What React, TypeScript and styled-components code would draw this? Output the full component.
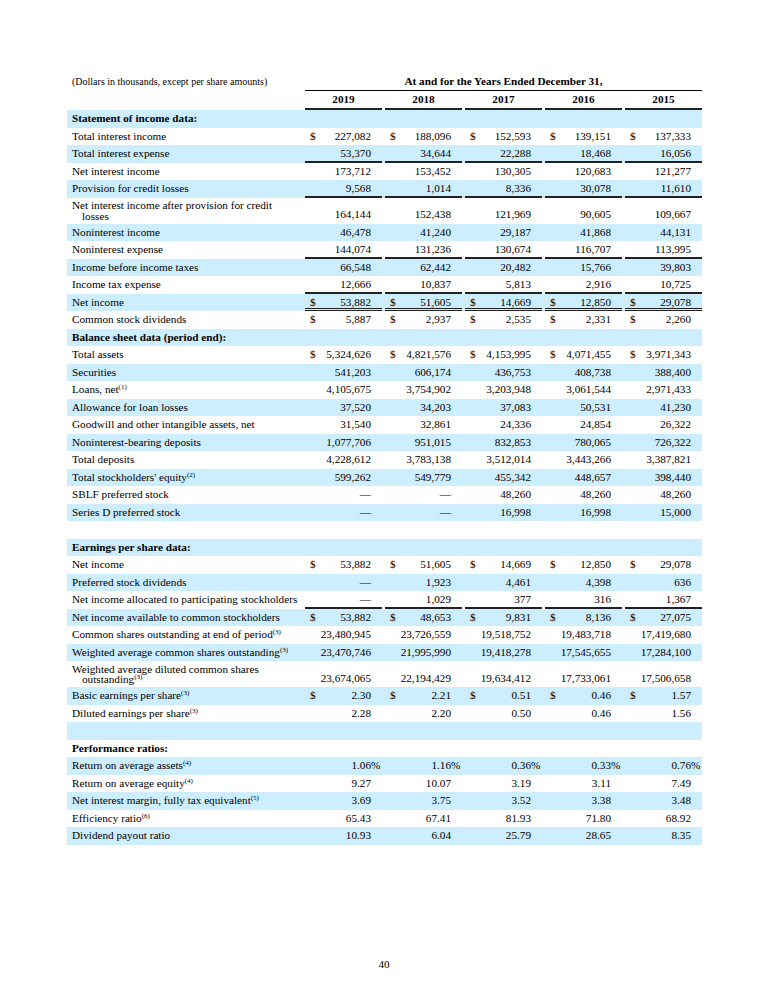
import React from 'react';
import styled, { createGlobalStyle, css } from 'styled-components';

const GlobalStyle = createGlobalStyle`
  html, body { margin: 0; padding: 0; background: #fff; }
  body { font-family: "Liberation Serif", "Times New Roman", serif; color: #000; }
`;

const COLS = '235px repeat(5, 80px)';
const SHADE = '#cceeff';
const RULE = '#222';

const Page = styled.div`
  width: 768px;
  min-height: 993px;
  box-sizing: border-box;
  padding-top: 73px;
  font-size: 11.2px;
`;

const Table = styled.div`
  width: 635px;
  margin-left: 67px;
  display: flex;
  flex-direction: column;
`;

const HeadRow = styled.div`
  display: grid;
  grid-template-columns: 235px 400px;
  height: 18px;
`;

const Note = styled.div`
  font-size: 10px;
  padding-left: 5px;
  line-height: 17px;
`;

const Title = styled.div`
  margin-left: 3px;
  box-sizing: border-box;
  border-bottom: 1px solid #000;
  text-align: center;
  font-weight: bold;
  line-height: 17px;
`;

const YearRow = styled.div`
  display: grid;
  grid-template-columns: ${COLS};
  height: 19px;
`;

const Year = styled.div`
  margin-left: 3px;
  font-weight: bold;
  text-align: center;
  line-height: 17px;
  background: linear-gradient(${RULE}, ${RULE}) left bottom / 100% 2px no-repeat;
`;

const Row = styled.div<{ $shaded: boolean; $tall?: boolean }>`
  display: grid;
  grid-template-columns: ${COLS};
  height: ${p => (p.$tall ? '26px' : '17.5px')};
  background: ${p => (p.$shaded ? SHADE : '#fff')};
`;

const Label = styled.div<{ $bold?: boolean; $tall?: boolean }>`
  padding-left: 5px;
  white-space: nowrap;
  font-weight: ${p => (p.$bold ? 'bold' : 'normal')};
  line-height: ${p => (p.$tall ? '10.5px' : '17.5px')};
  padding-top: ${p => (p.$tall ? '2.5px' : '0')};
`;

const Cont = styled.span`
  display: block;
  padding-left: 10px;
`;

const Sup = styled.sup`
  font-size: 7px;
  line-height: 0;
  vertical-align: 4px;
`;

const Group = styled.div<{ $line?: 'single' | 'double' }>`
  margin-left: 3px;
  display: grid;
  grid-template-columns: 14px 1fr 11px;
  align-items: end;
  line-height: 17.5px;
  ${p =>
    p.$line === 'single' &&
    css`
      background: linear-gradient(${RULE}, ${RULE}) left bottom / 100% 2px no-repeat;
    `}
  ${p =>
    p.$line === 'double' &&
    css`
      background: linear-gradient(to top, ${RULE} 0 1px, transparent 1px 2px, ${RULE} 2px 3px) left bottom / 100% 3px no-repeat;
    `}
`;

const Dollar = styled.span`
  padding-left: 5px;
`;

const Amount = styled.span`
  text-align: right;
  white-space: nowrap;
`;

const Suffix = styled.span`
  text-align: left;
`;

const PageNum = styled.div`
  margin-top: 111.5px;
  text-align: center;
  line-height: 17.5px;
`;

type Line = 'single' | 'double';
type R = {
  label?: React.ReactNode;
  cont?: React.ReactNode;
  head?: boolean;
  v?: string[];
  d?: boolean;
  u?: Line;
  pct?: boolean;
};

const s = (n: number) => <Sup>({n})</Sup>;
const D = '—';

const rows: R[] = [
  { label: 'Statement of income data:', head: true },
  { label: 'Total interest income', v: ['227,082', '188,096', '152,593', '139,151', '137,333'], d: true },
  { label: 'Total interest expense', v: ['53,370', '34,644', '22,288', '18,468', '16,056'], u: 'single' },
  { label: 'Net interest income', v: ['173,712', '153,452', '130,305', '120,683', '121,277'] },
  { label: 'Provision for credit losses', v: ['9,568', '1,014', '8,336', '30,078', '11,610'], u: 'single' },
  {
    label: 'Net interest income after provision for credit',
    cont: 'losses',
    v: ['164,144', '152,438', '121,969', '90,605', '109,667'],
  },
  { label: 'Noninterest income', v: ['46,478', '41,240', '29,187', '41,868', '44,131'] },
  { label: 'Noninterest expense', v: ['144,074', '131,236', '130,674', '116,707', '113,995'], u: 'single' },
  { label: 'Income before income taxes', v: ['66,548', '62,442', '20,482', '15,766', '39,803'] },
  { label: 'Income tax expense', v: ['12,666', '10,837', '5,813', '2,916', '10,725'], u: 'single' },
  { label: 'Net income', v: ['53,882', '51,605', '14,669', '12,850', '29,078'], d: true, u: 'double' },
  { label: 'Common stock dividends', v: ['5,887', '2,937', '2,535', '2,331', '2,260'], d: true },
  { label: 'Balance sheet data (period end):', head: true },
  { label: 'Total assets', v: ['5,324,626', '4,821,576', '4,153,995', '4,071,455', '3,971,343'], d: true },
  { label: 'Securities', v: ['541,203', '606,174', '436,753', '408,738', '388,400'] },
  { label: <>Loans, net{s(1)}</>, v: ['4,105,675', '3,754,902', '3,203,948', '3,061,544', '2,971,433'] },
  { label: 'Allowance for loan losses', v: ['37,520', '34,203', '37,083', '50,531', '41,230'] },
  { label: 'Goodwill and other intangible assets, net', v: ['31,540', '32,861', '24,336', '24,854', '26,322'] },
  { label: 'Noninterest-bearing deposits', v: ['1,077,706', '951,015', '832,853', '780,065', '726,322'] },
  { label: 'Total deposits', v: ['4,228,612', '3,783,138', '3,512,014', '3,443,266', '3,387,821'] },
  { label: <>Total stockholders' equity{s(2)}</>, v: ['599,262', '549,779', '455,342', '448,657', '398,440'] },
  { label: 'SBLF preferred stock', v: [D, D, '48,260', '48,260', '48,260'] },
  { label: 'Series D preferred stock', v: [D, D, '16,998', '16,998', '15,000'] },
  {},
  { label: 'Earnings per share data:', head: true },
  { label: 'Net income', v: ['53,882', '51,605', '14,669', '12,850', '29,078'], d: true },
  { label: 'Preferred stock dividends', v: [D, '1,923', '4,461', '4,398', '636'] },
  { label: 'Net income allocated to participating stockholders', v: [D, '1,029', '377', '316', '1,367'], u: 'single' },
  { label: 'Net income available to common stockholders', v: ['53,882', '48,653', '9,831', '8,136', '27,075'], d: true },
  {
    label: <>Common shares outstanding at end of period{s(3)}</>,
    v: ['23,480,945', '23,726,559', '19,518,752', '19,483,718', '17,419,680'],
  },
  {
    label: <>Weighted average common shares outstanding{s(3)}</>,
    v: ['23,470,746', '21,995,990', '19,418,278', '17,545,655', '17,284,100'],
  },
  {
    label: 'Weighted average diluted common shares',
    cont: <>outstanding{s(3)}</>,
    v: ['23,674,065', '22,194,429', '19,634,412', '17,733,061', '17,506,658'],
  },
  { label: <>Basic earnings per share{s(3)}</>, v: ['2.30', '2.21', '0.51', '0.46', '1.57'], d: true },
  { label: <>Diluted earnings per share{s(3)}</>, v: ['2.28', '2.20', '0.50', '0.46', '1.56'] },
  {},
  { label: 'Performance ratios:', head: true },
  { label: <>Return on average assets{s(4)}</>, v: ['1.06', '1.16', '0.36', '0.33', '0.76'], pct: true },
  { label: <>Return on average equity{s(4)}</>, v: ['9.27', '10.07', '3.19', '3.11', '7.49'] },
  { label: <>Net interest margin, fully tax equivalent{s(5)}</>, v: ['3.69', '3.75', '3.52', '3.38', '3.48'] },
  { label: <>Efficiency ratio{s(6)}</>, v: ['65.43', '67.41', '81.93', '71.80', '68.92'] },
  { label: 'Dividend payout ratio', v: ['10.93', '6.04', '25.79', '28.65', '8.35'] },
];

const years = ['2019', '2018', '2017', '2016', '2015'];

export default function App() {
  return (
    <>
      <GlobalStyle />
      <Page>
        <Table>
          <HeadRow>
            <Note>(Dollars in thousands, except per share amounts)</Note>
            <Title>At and for the Years Ended December 31,</Title>
          </HeadRow>
          <YearRow>
            <div />
            {years.map(y => (
              <Year key={y}>{y}</Year>
            ))}
          </YearRow>
          {rows.map((r, i) => {
            const tall = !!r.cont;
            return (
              <Row key={i} $shaded={i % 2 === 0} $tall={tall}>
                <Label $bold={r.head} $tall={tall}>
                  {r.label}
                  {r.cont && <Cont>{r.cont}</Cont>}
                </Label>
                {r.v
                  ? r.v.map((val, j) => (
                      <Group key={j} $line={r.u}>
                        <Dollar>{r.d ? '$' : ''}</Dollar>
                        <Amount>{val}</Amount>
                        <Suffix>{r.pct ? '%' : ''}</Suffix>
                      </Group>
                    ))
                  : null}
              </Row>
            );
          })}
        </Table>
        <PageNum>40</PageNum>
      </Page>
    </>
  );
}
